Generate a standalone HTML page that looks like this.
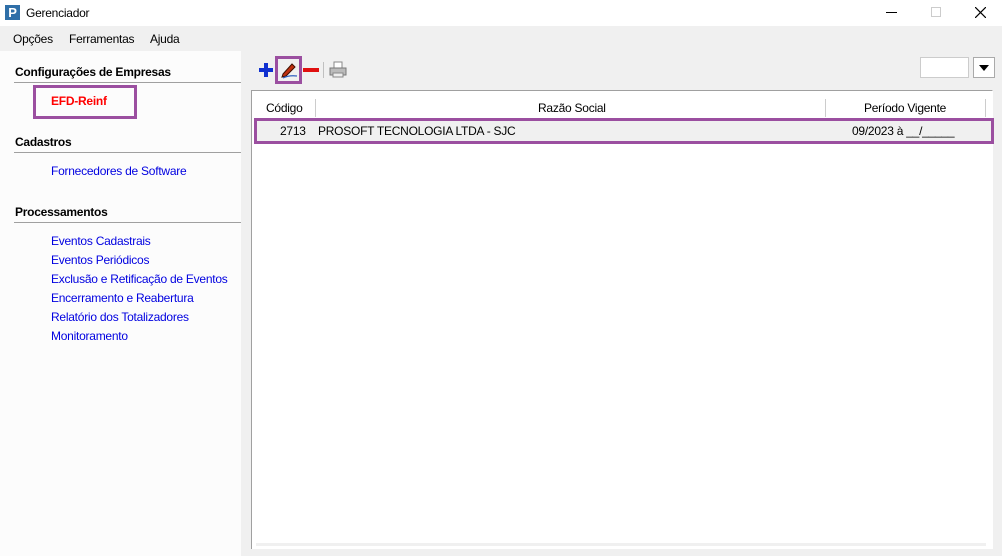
<!DOCTYPE html>
<html><head><meta charset="utf-8"><style>
*{margin:0;padding:0;box-sizing:border-box}
body{width:1002px;height:556px;overflow:hidden;font-family:"Liberation Sans",sans-serif;font-size:12px;letter-spacing:-0.25px;background:#f0f0f0;position:relative;color:#000}
.a{position:absolute}
.lnk{position:absolute;left:51px;color:#0000e0;font-size:12px}
.sec{position:absolute;left:15px;font-weight:bold;font-size:12px}
.hr{position:absolute;left:14px;width:227px;height:1px;background:#a0a0a0}
</style></head><body>
<div class="a" style="left:0;top:0;width:1002px;height:26px;background:#fff"></div>
<div class="a" style="left:5px;top:5px;width:15px;height:15px;background:#2f6fa8;color:#fff;font-weight:bold;font-size:13px;line-height:15px;text-align:center">P</div>
<div class="a" style="left:26px;top:6px;font-size:12px">Gerenciador</div>
<div class="a" style="left:886px;top:12px;width:11px;height:1px;background:#000"></div>
<div class="a" style="left:931px;top:7px;width:10px;height:10px;border:1px solid #ccc"></div>
<svg class="a" style="left:975px;top:7px" width="11" height="11"><path d="M0 0L11 11M11 0L0 11" stroke="#000" stroke-width="1.2"/></svg>
<div class="a" style="left:0;top:26px;width:1002px;height:25px;background:#f0f0f0"></div>
<div class="a" style="left:13px;top:32px">Opções</div>
<div class="a" style="left:69px;top:32px">Ferramentas</div>
<div class="a" style="left:150px;top:32px">Ajuda</div>
<div class="a" style="left:0;top:51px;width:241px;height:505px;background:#fcfcfc"></div>
<div class="sec" style="top:65px">Configurações de Empresas</div>
<div class="hr" style="top:82px"></div>
<div class="a" style="left:33px;top:85px;width:104px;height:34px;border:3px solid #9b4fa0"></div>
<div class="a" style="left:51px;top:94px;color:#f00;font-weight:bold">EFD-Reinf</div>
<div class="sec" style="top:135px">Cadastros</div>
<div class="hr" style="top:152px"></div>
<div class="lnk" style="top:164px">Fornecedores de Software</div>
<div class="sec" style="top:205px">Processamentos</div>
<div class="hr" style="top:222px"></div>
<div class="lnk" style="top:234px">Eventos Cadastrais</div>
<div class="lnk" style="top:253px">Eventos Periódicos</div>
<div class="lnk" style="top:272px">Exclusão e Retificação de Eventos</div>
<div class="lnk" style="top:291px">Encerramento e Reabertura</div>
<div class="lnk" style="top:310px">Relatório dos Totalizadores</div>
<div class="lnk" style="top:329px">Monitoramento</div>
<!-- toolbar -->
<svg class="a" style="left:258px;top:62px" width="16" height="16"><path d="M8 1V15M1 8H15" stroke="#1030d0" stroke-width="4"/></svg>
<div class="a" style="left:275px;top:56px;width:27px;height:28px;border:3px solid #9b4fa0"></div>
<svg class="a" style="left:279px;top:60px" width="20" height="20"><path d="M4 14L13 4L16 7L7 16L3 17Z" fill="#c03010" stroke="#401000" stroke-width="1"/><path d="M4 18Q10 15 18 16" stroke="#3060c0" fill="none" stroke-width="1.2"/></svg>
<div class="a" style="left:303px;top:68px;width:16px;height:4px;background:#e01010"></div>
<div class="a" style="left:323px;top:62px;width:1px;height:16px;background:#c0c0c0"></div>
<svg class="a" style="left:329px;top:61px" width="18" height="18"><rect x="5" y="1" width="8" height="7" fill="#fff" stroke="#888"/><rect x="1" y="7" width="16" height="7" fill="#bbb" stroke="#777"/><rect x="4" y="12" width="10" height="4" fill="#eee" stroke="#888"/></svg>
<div class="a" style="left:920px;top:57px;width:49px;height:21px;background:#fff;border:1px solid #ccc"></div>
<div class="a" style="left:973px;top:57px;width:22px;height:21px;background:#fff;border:1px solid #aaa"></div>
<svg class="a" style="left:979px;top:65px" width="10" height="6"><path d="M0 0H10L5 6Z" fill="#000"/></svg>
<!-- grid -->
<div class="a" style="left:251px;top:90px;width:742px;height:459px;background:#fff;border-top:1px solid #a0a0a0;border-left:1px solid #a0a0a0;border-right:1px solid #fff"></div>
<div class="a" style="left:256px;top:95px;width:730px;height:451px;background:#fff;border-bottom:3px solid #f0f0f0"></div>
<div class="a" style="left:256px;top:98px;width:730px;height:20px;background:#fff"></div>
<div class="a" style="left:315px;top:99px;width:1px;height:18px;background:#ccc"></div>
<div class="a" style="left:825px;top:99px;width:1px;height:18px;background:#ccc"></div>
<div class="a" style="left:985px;top:99px;width:1px;height:18px;background:#ccc"></div>
<div class="a" style="left:266px;top:101px">Código</div>
<div class="a" style="left:538px;top:101px">Razão Social</div>
<div class="a" style="left:864px;top:101px">Período Vigente</div>
<div class="a" style="left:254px;top:118px;width:740px;height:26px;background:#f0f0f0;border:3px solid #9b4fa0"></div>
<div class="a" style="left:280px;top:124px">2713</div>
<div class="a" style="left:318px;top:124px">PROSOFT TECNOLOGIA LTDA - SJC</div>
<div class="a" style="left:852px;top:124px">09/2023 à __/_____</div>
</body></html>
